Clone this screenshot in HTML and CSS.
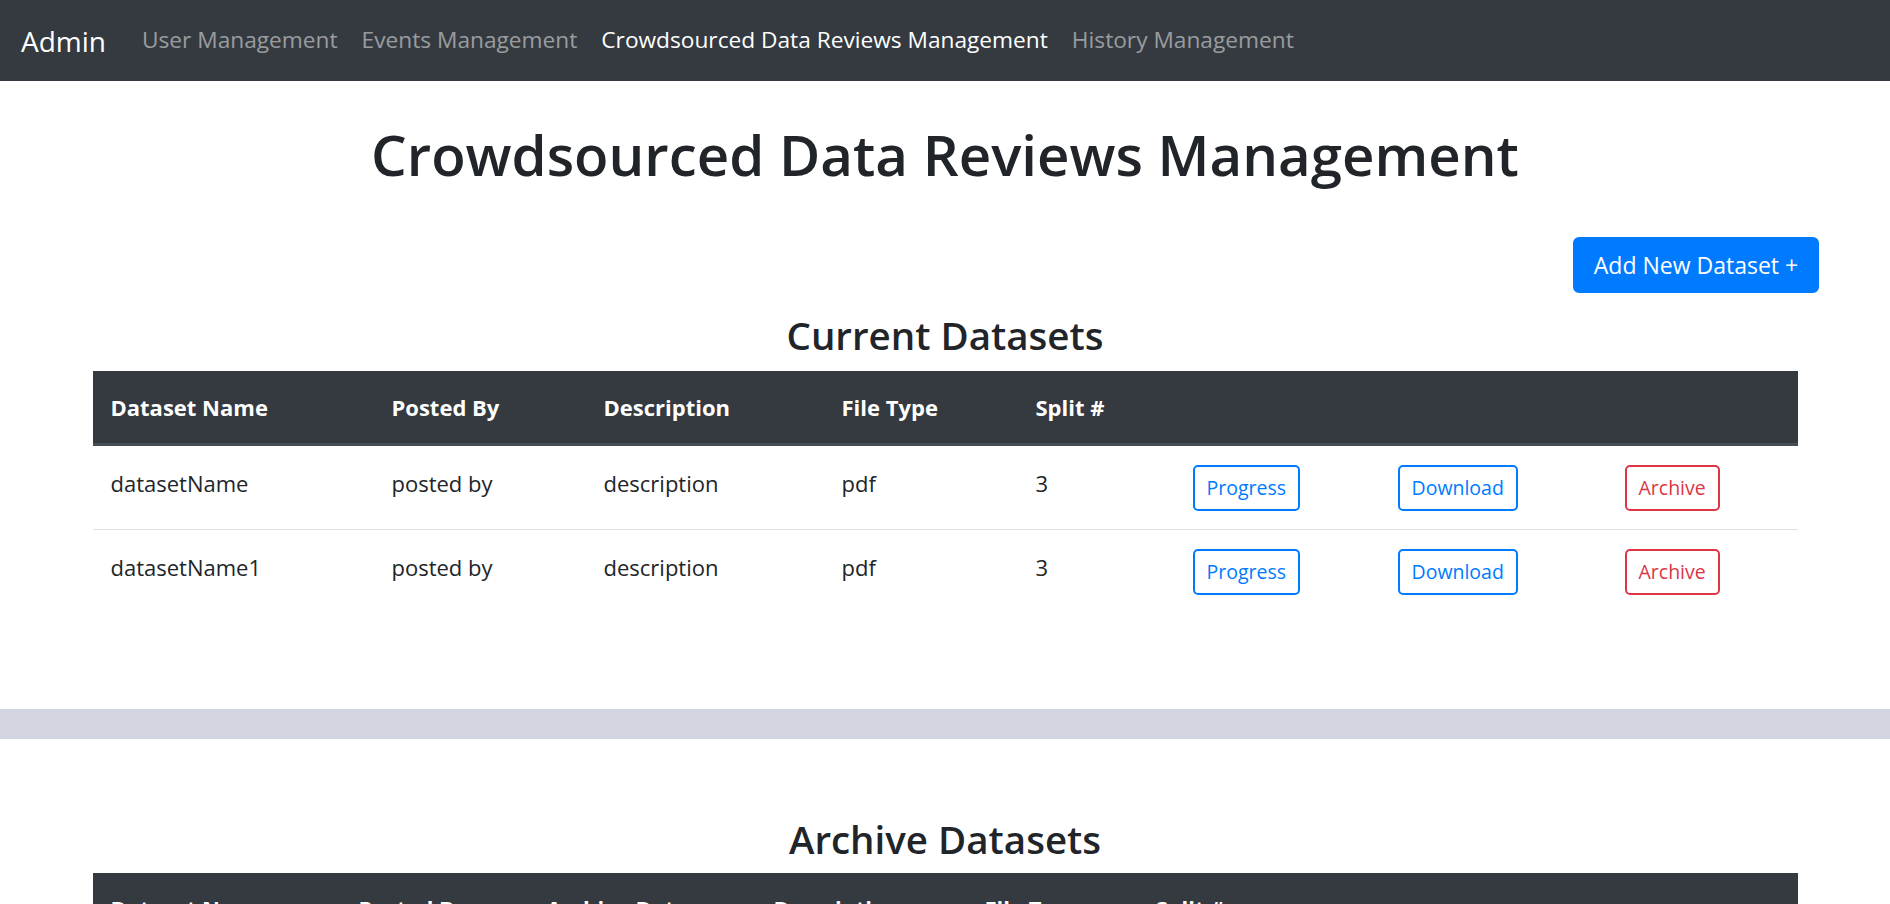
FILE: index.html
```html
<!DOCTYPE html>
<html lang="en">
<head>
<meta charset="utf-8">
<title>Crowdsourced Data Reviews Management</title>
<link rel="stylesheet" href="styles.css">
</head>
<body>
<nav class="navbar">
  <a class="brand" href="#">Admin</a>
  <ul class="nav-links">
    <li><a class="nav-link" href="#">User Management</a></li>
    <li><a class="nav-link" href="#">Events Management</a></li>
    <li><a class="nav-link active" href="#">Crowdsourced Data Reviews Management</a></li>
    <li><a class="nav-link" href="#">History Management</a></li>
  </ul>
</nav>

<main>
  <section class="current">
    <h1 class="page-title">Crowdsourced Data Reviews Management</h1>
    <div class="actions">
      <button class="btn btn-primary">Add New Dataset +</button>
    </div>
    <h2 class="section-title">Current Datasets</h2>
    <table class="data-table current-table">
      <thead>
        <tr>
          <th class="c1">Dataset Name</th>
          <th class="c2">Posted By</th>
          <th class="c3">Description</th>
          <th class="c4">File Type</th>
          <th class="c5">Split #</th>
          <th class="c6"></th>
          <th class="c7"></th>
          <th class="c8"></th>
        </tr>
      </thead>
      <tbody>
        <tr>
          <td>datasetName</td>
          <td>posted by</td>
          <td>description</td>
          <td>pdf</td>
          <td>3</td>
          <td><button class="btn btn-sm btn-outline-primary">Progress</button></td>
          <td><button class="btn btn-sm btn-outline-primary">Download</button></td>
          <td><button class="btn btn-sm btn-outline-danger">Archive</button></td>
        </tr>
        <tr>
          <td>datasetName1</td>
          <td>posted by</td>
          <td>description</td>
          <td>pdf</td>
          <td>3</td>
          <td><button class="btn btn-sm btn-outline-primary">Progress</button></td>
          <td><button class="btn btn-sm btn-outline-primary">Download</button></td>
          <td><button class="btn btn-sm btn-outline-danger">Archive</button></td>
        </tr>
      </tbody>
    </table>
  </section>

  <div class="divider"></div>

  <section class="archive">
    <h2 class="section-title">Archive Datasets</h2>
    <table class="data-table archive-table">
      <thead>
        <tr>
          <th class="a1">Dataset Name</th>
          <th class="a2">Posted By</th>
          <th class="a3">Archive Date</th>
          <th class="a4">Description</th>
          <th class="a5">File Type</th>
          <th class="a6">Split #</th>
        </tr>
      </thead>
      <tbody>
        <tr>
          <td>datasetName2</td>
          <td>posted by</td>
          <td>date</td>
          <td>description</td>
          <td>pdf</td>
          <td>3</td>
        </tr>
      </tbody>
    </table>
  </section>
</main>
</body>
</html>
```

FILE: styles.css
```css
* {
  box-sizing: border-box;
}

body {
  margin: 0;
  font-family: "Open Sans", "Noto Sans", "Liberation Sans", sans-serif;
  color: #212529;
  background: #fff;
}

/* Navbar */
.navbar {
  height: 81px;
  background: #343a40;
  display: flex;
  align-items: center;
  padding: 0 21px;
}

.brand {
  color: #fff;
  text-decoration: none;
  font-size: 28px;
  margin-right: 24px;
  line-height: 1;
}

.nav-links {
  display: flex;
  list-style: none;
  margin: 0;
  padding: 0;
}

.nav-link {
  display: block;
  padding: 0 12px;
  color: rgba(255, 255, 255, 0.5);
  text-decoration: none;
  font-size: 22.7px;
  line-height: 1;
}

.nav-link.active {
  color: #fff;
}

/* Headings */
.page-title {
  margin: 0;
  padding-top: 38px;
  text-align: center;
  font-size: 56.4px;
  font-weight: 600;
  line-height: 72px;
}

.section-title {
  margin: 0;
  text-align: center;
  font-size: 38.5px;
  font-weight: 600;
  line-height: 57px;
}

.actions {
  display: flex;
  justify-content: flex-end;
  padding-right: 71px;
  margin-top: 46px;
  margin-bottom: 14px;
}

/* Buttons */
.btn {
  font-family: inherit;
  background: transparent;
  border: 2px solid transparent;
  cursor: pointer;
  display: inline-block;
}

.btn-primary {
  background: #007bff;
  border-color: #007bff;
  color: #fff;
  font-size: 23px;
  height: 56px;
  width: 246px;
  border-radius: 6px;
  padding: 0;
}

.btn-sm {
  font-size: 19.5px;
  height: 46px;
  padding: 0 12px;
  border-radius: 5px;
  line-height: 1;
}

.btn-outline-primary {
  color: #007bff;
  border-color: #007bff;
}

.btn-outline-danger {
  color: #dc3545;
  border-color: #dc3545;
}

/* Tables */
.data-table {
  width: 1705px;
  margin: 0 auto;
  border-collapse: collapse;
  table-layout: fixed;
}

.data-table th {
  background: #343a40;
  color: #fff;
  text-align: left;
  font-weight: 700;
  font-size: 22px;
  height: 73px;
  padding: 0 18px;
  border-bottom: 3px solid #454d55;
  vertical-align: middle;
}

.data-table td {
  font-size: 22px;
  padding: 19px 18px 18px;
  height: 83px;
  vertical-align: top;
  line-height: 36px;
  border-top: 1.5px solid #dee2e6;
}

.data-table td .btn {
  vertical-align: top;
}

.data-table tbody tr:first-child td {
  border-top: none;
}

.c1 { width: 281px; }
.c2 { width: 212px; }
.c3 { width: 238px; }
.c4 { width: 194px; }
.c5 { width: 157px; }
.c6 { width: 205px; }
.c7 { width: 227px; }
.c8 { width: 191px; }

.a1 { width: 248px; }
.a2 { width: 188px; }
.a3 { width: 227px; }
.a4 { width: 211px; }
.a5 { width: 171px; }
.a6 { width: 660px; }

.current {
  padding-bottom: 96px;
}

.current .section-title {
  margin-bottom: 7px;
}

.divider {
  height: 30px;
  background: #d3d6e0;
}

.archive {
  padding-top: 72px;
}

.archive .section-title {
  margin-bottom: 5px;
}
```
